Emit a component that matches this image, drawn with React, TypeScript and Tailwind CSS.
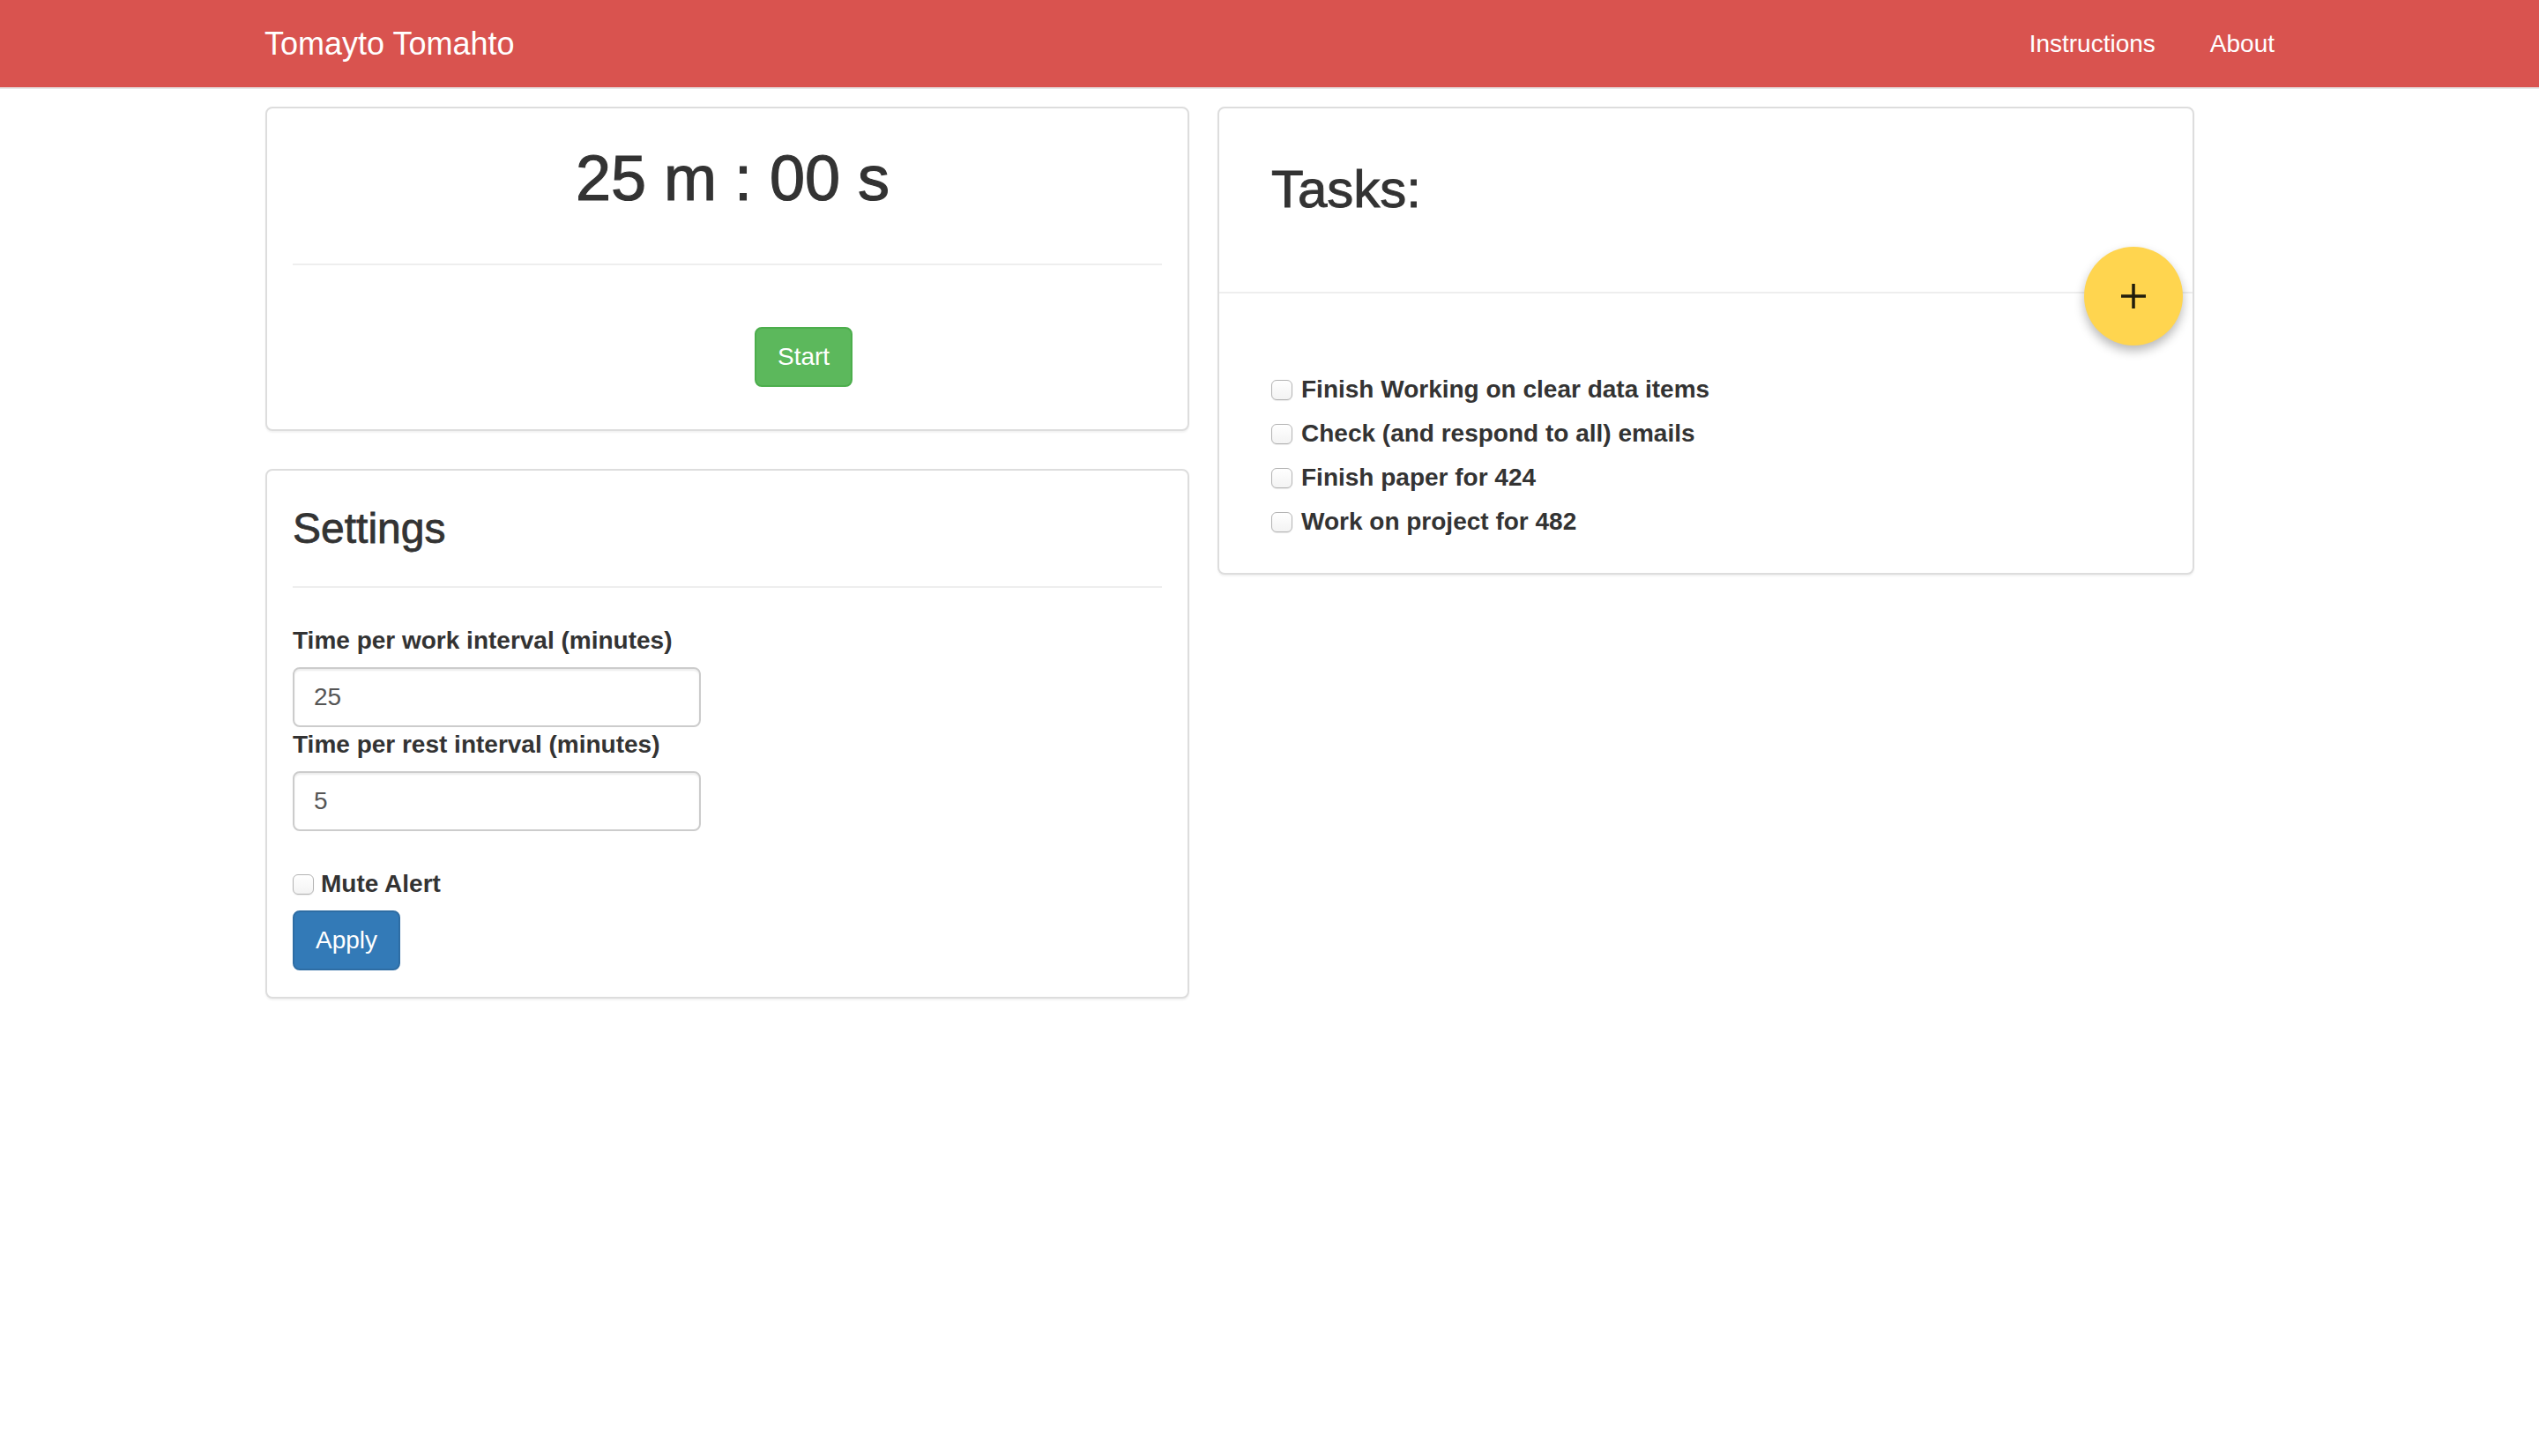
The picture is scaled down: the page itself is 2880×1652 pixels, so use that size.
import { useState } from "react";

const tasks = [
  "Finish Working on clear data items",
  "Check (and respond to all) emails",
  "Finish paper for 424",
  "Work on project for 482",
];

function Box({ checked, onClick }: { checked: boolean; onClick: () => void }) {
  return (
    <span
      onClick={onClick}
      className="flex h-[23px] w-[24px] shrink-0 items-center justify-center rounded-[6px] border border-[#b3b3b3] bg-gradient-to-b from-white to-[#f3f3f3] shadow-[0_1px_1px_rgba(0,0,0,0.08)]"
    >
      {checked && <span className="h-[10px] w-[10px] rounded-[2px] bg-[#555]" />}
    </span>
  );
}

function Navbar() {
  return (
    <nav className="h-[101px] border-b-2 border-[#e7e7e7] bg-[#d9534f]">
      <div className="mx-auto flex h-full w-[2340px] items-center justify-between px-[30px] text-white">
        <a className="text-[36px] leading-[40px]">Tomayto Tomahto</a>
        <div className="flex gap-[62px] text-[28px] leading-[40px]">
          <a>Instructions</a>
          <a>About</a>
        </div>
      </div>
    </nav>
  );
}

function Timer() {
  return (
    <div className="rounded-[8px] border-2 border-[#ddd] bg-white px-[29px] pb-[48px] shadow-[0_2px_2px_rgba(0,0,0,0.05)]">
      <h1 className="pt-[40px] pl-[12px] text-center text-[72px] font-medium leading-[79px] [-webkit-text-stroke:1.2px_#333]">
        25 m : 00 s
      </h1>
      <hr className="mt-[57px] border-t-2 border-[#eee]" />
      <button className="ml-[524px] mt-[70px] rounded-[8px] border-2 border-[#4cae4c] bg-[#5cb85c] px-[24px] py-[12px] text-[28px] leading-[40px] text-white">
        Start
      </button>
    </div>
  );
}

function Settings() {
  const [mute, setMute] = useState(false);
  return (
    <div className="rounded-[8px] border-2 border-[#ddd] bg-white px-[29px] pb-[30px] shadow-[0_2px_2px_rgba(0,0,0,0.05)]">
      <h3 className="pt-[39px] text-[48px] font-medium leading-[53px] [-webkit-text-stroke:0.8px_#333]">Settings</h3>
      <hr className="mt-[39px] border-t-2 border-[#eee]" />
      <label className="mt-[40px] block text-[28px] font-bold leading-[40px]">Time per work interval (minutes)</label>
      <input
        defaultValue="25"
        className="mt-[10px] block h-[68px] w-[463px] rounded-[8px] border-2 border-[#ccc] px-[22px] text-[28px] text-[#555] shadow-[inset_0_2px_2px_rgba(0,0,0,0.075)] outline-none"
      />
      <label className="block text-[28px] font-bold leading-[40px]">Time per rest interval (minutes)</label>
      <input
        defaultValue="5"
        className="mt-[10px] block h-[68px] w-[463px] rounded-[8px] border-2 border-[#ccc] px-[22px] text-[28px] text-[#555] shadow-[inset_0_2px_2px_rgba(0,0,0,0.075)] outline-none"
      />
      <div className="mt-[40px] flex items-center gap-[8px] text-[28px] font-bold leading-[40px]">
        <Box checked={mute} onClick={() => setMute(!mute)} />
        <span>Mute Alert</span>
      </div>
      <button className="mt-[10px] rounded-[8px] border-2 border-[#2e6da4] bg-[#337ab7] px-[24px] py-[12px] text-[28px] leading-[40px] text-white">
        Apply
      </button>
    </div>
  );
}

function Tasks() {
  const [done, setDone] = useState<boolean[]>(tasks.map(() => false));
  return (
    <div className="relative w-[1108px] self-start rounded-[8px] border-2 border-[#ddd] bg-white shadow-[0_2px_2px_rgba(0,0,0,0.05)]">
      <div className="h-[210px] border-b-2 border-[#eee] px-[59px] pt-[59px]">
        <h2 className="text-[60px] font-medium leading-[66px] [-webkit-text-stroke:1px_#333]">Tasks:</h2>
      </div>
      <ul className="px-[59px] pt-[84px] pb-[33px]">
        {tasks.map((t, i) => (
          <li key={t} className="flex h-[50px] items-center gap-[10px] text-[28px] font-bold">
            <Box checked={done[i]} onClick={() => setDone(done.map((d, j) => (j === i ? !d : d)))} />
            <span>{t}</span>
          </li>
        ))}
      </ul>
      <button className="absolute right-[11px] top-[157px] flex h-[112px] w-[112px] items-center justify-center rounded-full bg-[#ffd54f] shadow-[0_6px_12px_rgba(0,0,0,0.28)]">
        <svg width="28" height="28" viewBox="0 0 28 28">
          <rect x="12.25" y="0" width="3.5" height="28" fill="#211d0c" />
          <rect x="0" y="12.25" width="28" height="3.5" fill="#211d0c" />
        </svg>
      </button>
    </div>
  );
}

export default function App() {
  return (
    <div className="min-h-screen bg-white text-[#333] [font-family:'Liberation_Sans',Arial,sans-serif]">
      <Navbar />
      <main className="mx-auto mt-[20px] flex w-[2340px] gap-[32px] px-[31px]">
        <div className="flex w-[1048px] flex-col gap-[43px]">
          <Timer />
          <Settings />
        </div>
        <Tasks />
      </main>
    </div>
  );
}
